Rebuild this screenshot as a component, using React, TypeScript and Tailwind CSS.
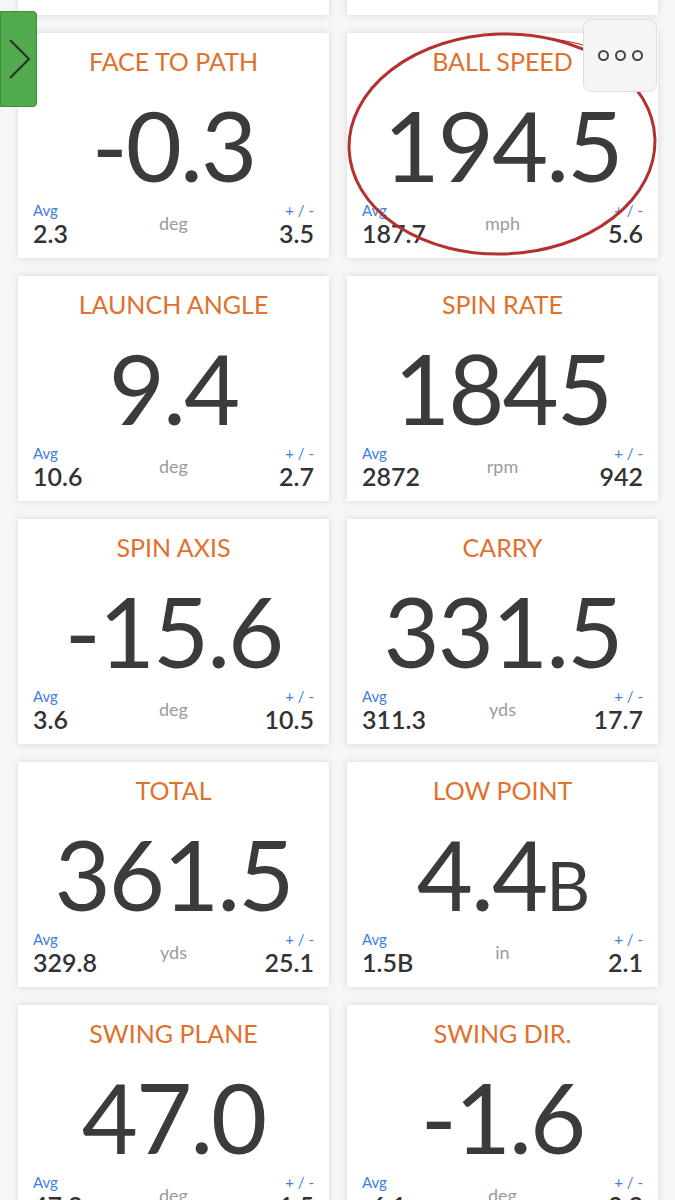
import { ReactNode } from 'react';

// ─── Data ─────────────────────────────────────────────────────────────────────

interface Metric {
    title: string;
    value: ReactNode;
    unit: string;
    avg: string;
    dev: string;
}

const metrics: Metric[] = [
    { title: 'CLUB PATH', value: '2.6', unit: 'deg', avg: '3.2', dev: '2.2' },
    { title: 'FACE ANGLE', value: '2.3', unit: 'deg', avg: '4.2', dev: '2.5' },
    { title: 'FACE TO PATH', value: '-0.3', unit: 'deg', avg: '2.3', dev: '3.5' },
    { title: 'BALL SPEED', value: '194.5', unit: 'mph', avg: '187.7', dev: '5.6' },
    { title: 'LAUNCH ANGLE', value: '9.4', unit: 'deg', avg: '10.6', dev: '2.7' },
    { title: 'SPIN RATE', value: '1845', unit: 'rpm', avg: '2872', dev: '942' },
    { title: 'SPIN AXIS', value: '-15.6', unit: 'deg', avg: '3.6', dev: '10.5' },
    { title: 'CARRY', value: '331.5', unit: 'yds', avg: '311.3', dev: '17.7' },
    { title: 'TOTAL', value: '361.5', unit: 'yds', avg: '329.8', dev: '25.1' },
    { title: 'LOW POINT', value: <>4.4<span className="text-[68px] leading-none">B</span></>, unit: 'in', avg: '1.5B', dev: '2.1' },
    { title: 'SWING PLANE', value: '47.0', unit: 'deg', avg: '47.2', dev: '1.5' },
    { title: 'SWING DIR.', value: '-1.6', unit: 'deg', avg: '-6.1', dev: '3.2' },
];

// ─── Pieces ───────────────────────────────────────────────────────────────────

function Circled() {
    // hand-drawn red annotation around the ball speed tile
    return (
        <svg
            className="absolute left-[-8px] top-[-8px] pointer-events-none overflow-visible"
            width="330"
            height="240"
            viewBox="0 0 330 240"
        >
            <ellipse cx="163" cy="119" rx="153" ry="110" fill="none" stroke="#b5302e" strokeWidth="3" transform="rotate(-2 163 119)" />
            <path d="M214 14 C232 16 246 20 262 26" fill="none" stroke="#b5302e" strokeWidth="1.2" />
        </svg>
    );
}

function MetricCard({ m, circled }: { m: Metric; circled?: boolean }) {
    return (
        <div className="relative h-[225px] bg-white shadow-[0_0_7px_rgba(0,0,0,0.13)] flex flex-col pt-[13px] px-[15px]">
            <div className="text-center text-[25px] leading-[30px] text-[#e0712c]">{m.title}</div>
            <div className="mt-[19px] h-[100px] text-center text-[97px] leading-[100px] tracking-[-2px] text-[#3b3b3b]">{m.value}</div>
            <div className="mt-[6px] grid grid-cols-3">
                <div className="flex flex-col items-start">
                    <span className="text-[15px] leading-[18px] text-[#3f7de0]">Avg</span>
                    <span className="text-[25px] leading-[28px] font-semibold text-[#333]">{m.avg}</span>
                </div>
                <div className="pt-[11px] text-center text-[18px] leading-[22px] text-[#9b9b9b]">{m.unit}</div>
                <div className="flex flex-col items-end">
                    <span className="text-[15px] leading-[18px] text-[#3f7de0]">+ / -</span>
                    <span className="text-[25px] leading-[28px] font-semibold text-[#333]">{m.dev}</span>
                </div>
            </div>
            {circled && <Circled />}
        </div>
    );
}

// ─── App ──────────────────────────────────────────────────────────────────────

export default function App() {
    return (
        <div className="relative w-[675px] h-[1200px] overflow-hidden bg-[#f6f6f6] font-['Lato',sans-serif]">
            <div className="mt-[-210px] pl-[18px] pr-[17px] grid grid-cols-[311px_311px] gap-[18px]">
                {metrics.map((m) => (
                    <MetricCard key={m.title} m={m} circled={m.title === 'BALL SPEED'} />
                ))}
            </div>

            {/* side drawer tab */}
            <div className="absolute left-0 top-[11px] w-[37px] h-[96px] bg-[#51aa4b] border border-[#3f8d3a] rounded-r-[4px] flex items-center justify-center">
                <svg width="24" height="40" viewBox="0 0 24 40" fill="none" stroke="#2b2b2b" strokeWidth="2">
                    <path d="M3 1 L22 20 L3 39" />
                </svg>
            </div>

            {/* overflow menu */}
            <div className="absolute left-[583px] top-[19px] w-[74px] h-[73px] bg-[#f5f5f5] border border-[#dedede] rounded-[8px] flex items-center justify-center gap-[6px]">
                <span className="w-[11px] h-[11px] rounded-full border-2 border-[#444]" />
                <span className="w-[11px] h-[11px] rounded-full border-2 border-[#444]" />
                <span className="w-[11px] h-[11px] rounded-full border-2 border-[#444]" />
            </div>
        </div>
    );
}
